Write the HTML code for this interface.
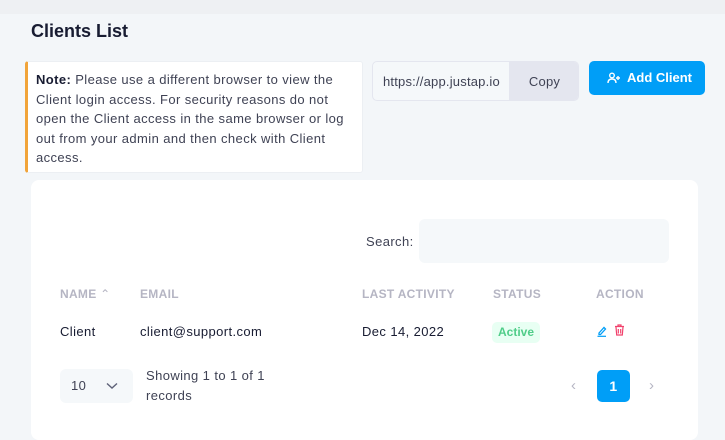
<!DOCTYPE html>
<html><head><style>
*{margin:0;padding:0;box-sizing:border-box}
body{width:725px;height:433px;overflow:hidden;background:#f3f6f9;font-family:"Liberation Sans",sans-serif;position:relative;color:#181c32;letter-spacing:0.4px}
.a{position:absolute;white-space:nowrap}
.topbar{left:0;top:0;width:725px;height:14px;background:#eef0f3}
h1{position:absolute;left:31px;top:21px;font-size:18px;font-weight:bold;color:#181c32;letter-spacing:0}
.note{left:25px;top:61px;width:338px;height:112px;background:#fff;border:1px solid #eceff3;border-left:3px solid #f1a43a;border-radius:3px;padding:8px 8px 0 8px;font-size:13px;line-height:19.5px;color:#3f4254}
.url{left:372px;top:61px;width:207px;height:40px;border:1px solid #e4e6ef;border-radius:5px;background:#f5f8fa;overflow:hidden;font-size:13px;letter-spacing:0.2px}
.url span{position:absolute;left:10px;top:12px;color:#3f4254}
.url div{position:absolute;left:136px;top:0;width:71px;height:40px;background:#e4e6ef;text-align:center;line-height:40px;color:#3f4254}
.btn{left:589px;top:61px;width:116px;height:34px;background:#009ef7;border-radius:5px;color:#fff;font-size:13px;font-weight:bold;line-height:34px;padding-left:38px;letter-spacing:0}
.card{left:31px;top:180px;width:667px;height:260px;background:#fff;border-radius:8px}
.s{font-size:13px;color:#3f4254}
.search{left:419px;top:219px;width:250px;height:44px;background:#f5f8fa;border-radius:6px}
.th{font-size:12px;font-weight:bold;color:#b5b5c3;top:287px;letter-spacing:0.3px}
.td{font-size:13px;color:#181c32;top:324px}
.badge{left:492px;top:322px;width:48px;height:21px;background:#e8fff3;border-radius:5px;color:#50cd89;font-size:12px;font-weight:bold;text-align:center;line-height:21px;letter-spacing:0}
.sel{left:60px;top:369px;width:73px;height:34px;background:#f5f8fa;border-radius:6px;font-size:13px;color:#3f4254;padding:9px 0 0 11px}
.pg{left:597px;top:370px;width:33px;height:32px;background:#009ef7;border-radius:5px;color:#fff;font-size:14px;font-weight:bold;text-align:center;line-height:32px}
</style></head><body>
<div class="a topbar"></div>
<h1>Clients List</h1>
<div class="a note"><b style="color:#181c32">Note:</b> Please use a different browser to view the<br>Client login access. For security reasons do not<br>open the Client access in the same browser or log<br>out from your admin and then check with Client<br>access.</div>
<div class="a url"><span>https://app.justap.io</span><div>Copy</div></div>
<div class="a btn"><svg class="a" style="left:18px;top:11px" width="14" height="12" viewBox="0 0 14 12"><circle cx="5" cy="3.5" r="2.3" fill="none" stroke="#fff" stroke-width="1.4"/><path d="M1 11c0-3 1.8-4 4-4s4 1 4 4" fill="none" stroke="#fff" stroke-width="1.4"/><path d="M11 4v4M9 6h4" stroke="#fff" stroke-width="1.4"/></svg>Add Client</div>
<div class="a card"></div>
<div class="a s" style="left:366px;top:234px">Search:</div>
<div class="a search"></div>
<div class="a th" style="left:60px">NAME <span style="font-weight:normal">&#8963;</span></div>
<div class="a th" style="left:140px">EMAIL</div>
<div class="a th" style="left:362px">LAST ACTIVITY</div>
<div class="a th" style="left:493px">STATUS</div>
<div class="a th" style="left:596px">ACTION</div>
<div class="a td" style="left:60px">Client</div>
<div class="a td" style="left:140px">client@support.com</div>
<div class="a td" style="left:362px">Dec 14, 2022</div>
<div class="a badge">Active</div>
<svg class="a" style="left:597px;top:325px" width="10" height="12" viewBox="0 0 10 12"><path d="M2 8L7 2.5 8.5 4 3.5 9.5H2z" fill="none" stroke="#009ef7" stroke-width="1.3"/><path d="M0.5 11.3H9" stroke="#009ef7" stroke-width="1.2"/></svg>
<svg class="a" style="left:614px;top:324px" width="11" height="12" viewBox="0 0 11 12"><path d="M1 2.5h9M4 2.5V1h3v1.5M2 3l.7 8h5.6L9 3M4.3 5v4.5M6.7 5v4.5" fill="none" stroke="#f1416c" stroke-width="1.2"/></svg>
<div class="a sel">10<svg class="a" style="left:46px;top:13px" width="12" height="8" viewBox="0 0 12 8"><path d="M1 1.5l5 4.5 5-4.5" fill="none" stroke="#5e6278" stroke-width="1.4"/></svg></div>
<div class="a s" style="left:146px;top:366px;line-height:20px">Showing 1 to 1 of 1<br>records</div>
<div class="a" style="left:571px;top:377px;color:#b5b5c3;font-size:15px">&#8249;</div>
<div class="a pg">1</div>
<div class="a" style="left:649px;top:377px;color:#b5b5c3;font-size:15px">&#8250;</div>
</body></html>
